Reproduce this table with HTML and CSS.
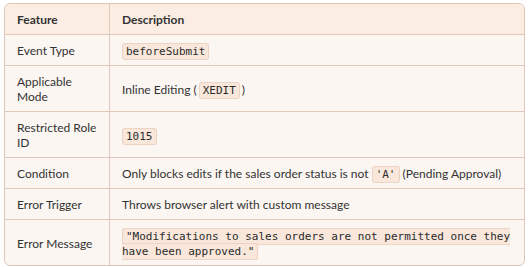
FILE: index.html
```html
<!DOCTYPE html>
<html lang="en">
<head>
<meta charset="utf-8">
<link rel="stylesheet" href="styles.css">
</head>
<body>
<div class="wrap">
<table class="spec">
<thead>
<tr><th class="c1">Feature</th><th>Description</th></tr>
</thead>
<tbody>
<tr><td class="c1">Event Type</td><td><code>beforeSubmit</code></td></tr>
<tr><td class="c1">Applicable Mode</td><td>Inline Editing (<code class="tight">XEDIT</code>)</td></tr>
<tr><td class="c1">Restricted Role ID</td><td><code>1015</code></td></tr>
<tr><td class="c1">Condition</td><td>Only blocks edits if the sales order status is not <code>'A'</code> (Pending Approval)</td></tr>
<tr><td class="c1">Error Trigger</td><td>Throws browser alert with custom message</td></tr>
<tr><td class="c1">Error Message</td><td><code>"Modifications to sales orders are not permitted once they have been approved."</code></td></tr>
</tbody>
</table>
</div>
</body>
</html>
```
FILE: styles.css
```css
html, body {
  margin: 0;
  padding: 0;
  background: #ffffff;
}
body {
  padding: 3px 4px;
  font-family: "Lato", "Noto Sans", sans-serif;
  font-size: 12px;
  color: #333333;
}
.wrap {
  border: 1px solid #dfc8b9;
  border-radius: 6px;
  overflow: hidden;
  background: #fbf6f2;
}
.spec {
  width: 100%;
  border-collapse: collapse;
  border-spacing: 0;
}
.spec th, .spec td {
  text-align: left;
  vertical-align: middle;
  padding: 8px 12px 7px;
  line-height: 15px;
  height: 15px;
  border-top: 1px solid #dfc8b9;
}
.spec thead th {
  border-top: 0;
  background: #fcede3;
  font-weight: 700;
  color: #333333;
  border-bottom: 1px solid #dfc8b9;
}
.spec tbody tr:first-child td {
  border-top: 0;
}
.spec .c1 {
  width: 80px;
  border-right: 1px solid #dfc8b9;
}
code {
  font-family: "DejaVu Sans Mono", monospace;
  font-size: 11px;
  line-height: 12px;
  background: #f9e7db;
  border: 1px solid #ecd3c3;
  border-radius: 3px;
  padding: 1px 3px;
  color: #2b2b2b;
}
code.tight {
  margin: 0 2px;
}
```
